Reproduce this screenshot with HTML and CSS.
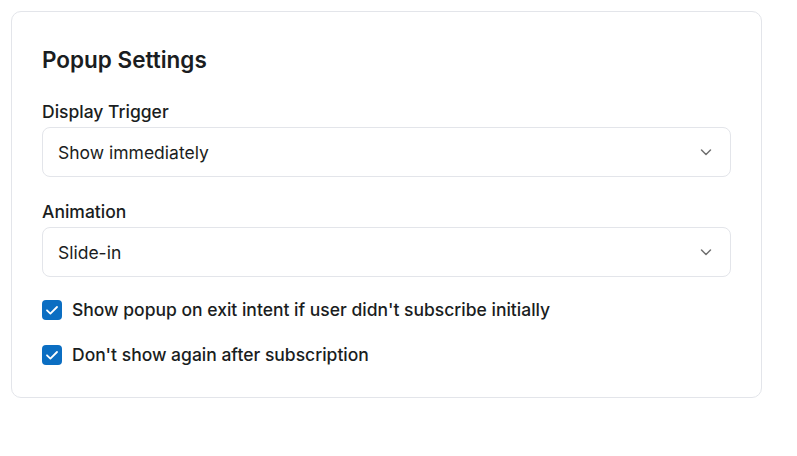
FILE: index.html
```html
<!DOCTYPE html>
<html>
<head>
<meta charset="utf-8">
<link rel="stylesheet" href="styles.css">
</head>
<body>
<div class="page">
  <section class="card">
    <h2 class="title">Popup Settings</h2>
    <div class="field">
      <label class="label">Display Trigger</label>
      <div class="select">
        <span>Show immediately</span>
        <svg class="chev" width="16" height="16" viewBox="0 0 16 16"><path d="M3.5 6 L8 10.5 L12.5 6" fill="none" stroke="#707070" stroke-width="1.5" stroke-linecap="round" stroke-linejoin="round"/></svg>
      </div>
    </div>
    <div class="field">
      <label class="label">Animation</label>
      <div class="select">
        <span>Slide-in</span>
        <svg class="chev" width="16" height="16" viewBox="0 0 16 16"><path d="M3.5 6 L8 10.5 L12.5 6" fill="none" stroke="#707070" stroke-width="1.5" stroke-linecap="round" stroke-linejoin="round"/></svg>
      </div>
    </div>
    <div class="checks">
      <div class="check">
        <span class="box"><svg width="16" height="16" viewBox="0 0 16 16"><path d="M3 8.3 L6.4 11.6 L13 5" fill="none" stroke="#fff" stroke-width="1.8" stroke-linecap="round" stroke-linejoin="round"/></svg></span>
        <span>Show popup on exit intent if user didn't subscribe initially</span>
      </div>
      <div class="check">
        <span class="box"><svg width="16" height="16" viewBox="0 0 16 16"><path d="M3 8.3 L6.4 11.6 L13 5" fill="none" stroke="#fff" stroke-width="1.8" stroke-linecap="round" stroke-linejoin="round"/></svg></span>
        <span>Don't show again after subscription</span>
      </div>
    </div>
  </section>
</div>
</body>
</html>
```
FILE: styles.css
```css
* { box-sizing: border-box; }
html, body { margin: 0; background: #fff; }
body {
  font-family: Inter, "Noto Sans", sans-serif;
  color: #1a1d21;
}
.page { padding: 11px 35px 0 11px; }
.card {
  width: 751px;
  border: 1px solid #e3e5ea;
  border-radius: 10px;
  padding: 34px 30px 32px 30px;
}
.title {
  margin: 0 0 28px 0;
  font-size: 22.5px;
  line-height: 28px;
  font-weight: 600;
}
.field { margin-bottom: 25px; }
.label {
  display: block;
  font-size: 17.5px;
  line-height: 20px;
  font-weight: 500;
  margin-bottom: 5px;
}
.select {
  height: 50px;
  border: 1px solid #e3e5ea;
  border-radius: 8px;
  display: flex;
  align-items: center;
  justify-content: space-between;
  padding: 0 16px 0 15px;
  font-size: 17.5px;
}
.checks { display: flex; flex-direction: column; gap: 25px; margin-top: -2px; }
.check {
  display: flex;
  align-items: center;
  gap: 10px;
  font-size: 17.5px;
  line-height: 20px;
  font-weight: 500;
}
.box {
  width: 20px; height: 20px;
  border-radius: 4px;
  background: #0b6ec2;
  display: flex; align-items: center; justify-content: center;
}
```
